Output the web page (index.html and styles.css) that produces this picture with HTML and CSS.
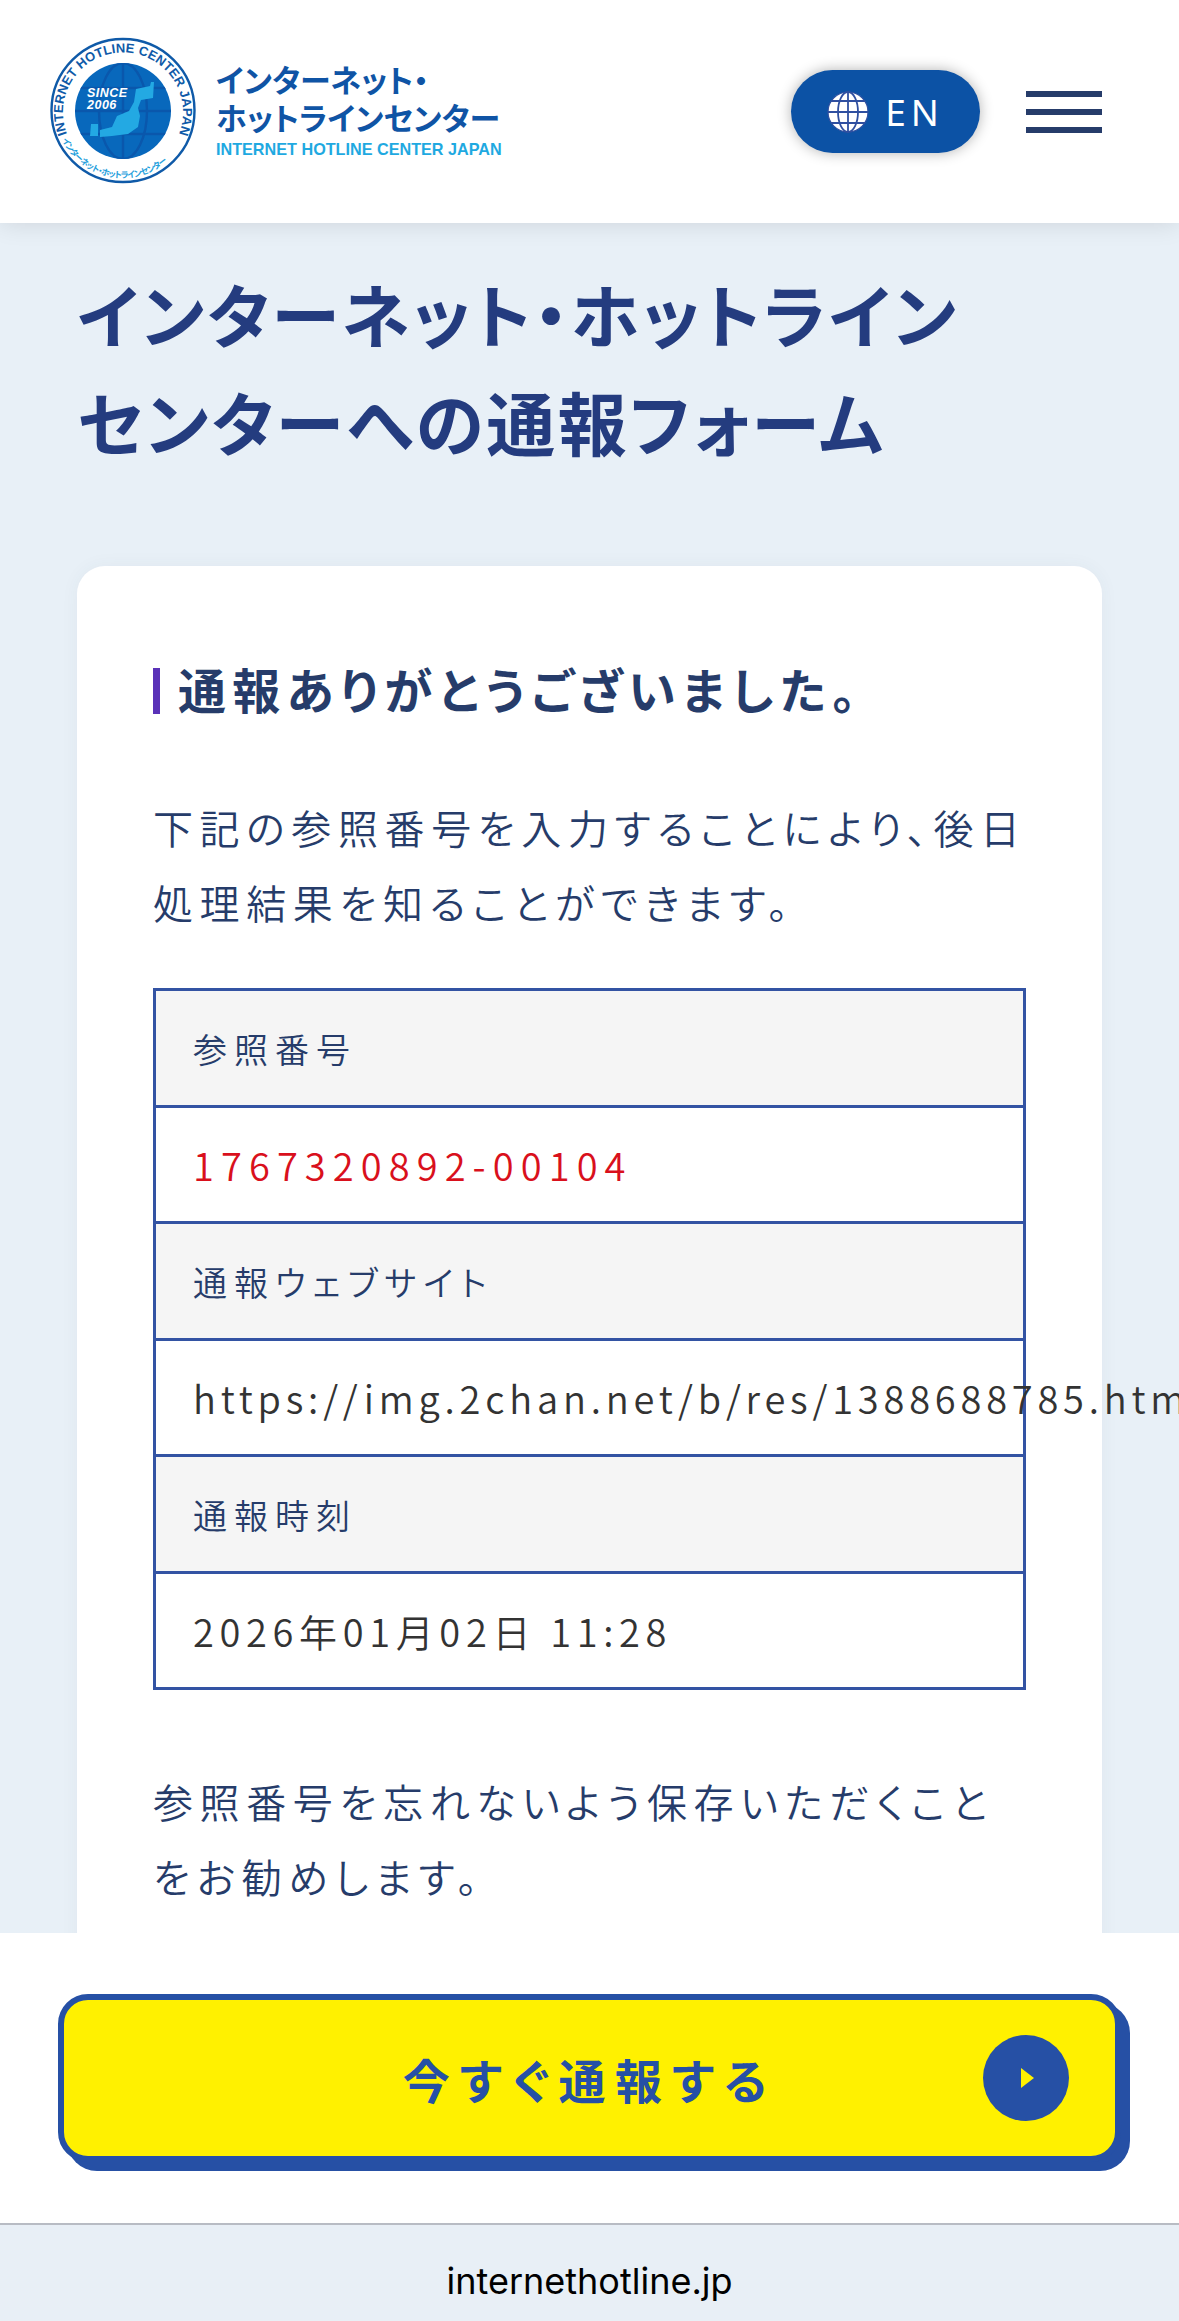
FILE: index.html
```html
<!DOCTYPE html>
<html lang="ja">
<head>
    <meta charset="UTF-8">
    <meta name="viewport" content="width=device-width, initial-scale=1.0">
    <title>インターネット・ホットラインセンターへの通報フォーム</title>
    <link rel="stylesheet" href="styles.css">
</head>
<body>
    <header class="site-header">
        <a class="logo" href="#">
            <svg class="logo-mark" viewBox="0 0 170 160" width="170" height="160">
                <defs>
                    <path id="ringTop" d="M27 104 A60 60 0 1 1 139 104"/>
                    <path id="ringBottom" d="M22 110 A68 68 0 0 0 144 110"/>
                    <clipPath id="globeClip"><circle cx="83" cy="81" r="48"/></clipPath>
                </defs>
                <circle cx="83" cy="80.5" r="71.5" fill="#fff" stroke="#0f5aa8" stroke-width="2.4"/>
                <circle cx="83" cy="81" r="48" fill="#0868bc"/>
                <g clip-path="url(#globeClip)" fill="none" stroke="#0a57ac" stroke-width="2.4">
                    <ellipse cx="83" cy="81" rx="24" ry="48"/>
                    <path d="M83 33V129M35 81H131M38 58H128M38 104H128"/>
                </g>
                <path class="logo-land" d="M96 59 L110 56 L111 52 L114 52 L113 68 L101 70 L98 78 L100 86 L98 97 L88 104 L72 106 L60 107 L60 100 L72 97 L77 86 L89 81 L94 72 Z"/>
                <path class="logo-land" d="M51 94 L58 94 L58 106 L50 106 Z"/>
                <text class="logo-since" x="47" y="67">SINCE</text>
                <text class="logo-since" x="47" y="79">2006</text>
                <text class="logo-ring"><textPath href="#ringTop" textLength="232" lengthAdjust="spacing">INTERNET HOTLINE CENTER JAPAN</textPath></text>
                <text class="logo-ring-ja"><textPath href="#ringBottom" textLength="124" lengthAdjust="spacing">インターネット・ホットラインセンター</textPath></text>
            </svg>
            <span class="logo-text">
                <span class="logo-ja">インターネット・</span>
                <span class="logo-ja">ホットラインセンター</span>
                <span class="logo-en">INTERNET HOTLINE CENTER JAPAN</span>
            </span>
        </a>
        <div class="header-actions">
            <a class="lang-btn" href="#">
                <svg class="lang-globe" viewBox="0 0 42 42" width="42" height="42">
                    <circle cx="21" cy="21" r="20" fill="#fff" stroke="#2f4fa0" stroke-width="1.2"/>
                    <g fill="none" stroke="#2f4fa0" stroke-width="1.8">
                        <ellipse cx="21" cy="21" rx="10" ry="20"/>
                        <path d="M21 1V41M1 21H41M4 10H38M4 32H38"/>
                    </g>
                </svg>
                <span>EN</span>
            </a>
            <button class="menu-btn" aria-label="menu"><span></span><span></span><span></span></button>
        </div>
    </header>

    <main class="content">
        <h1>インターネット・ホットライン<br>センターへの通報フォーム</h1>

        <section class="card">
            <h2>通報ありがとうございました。</h2>
            <p class="lead">下記の参照番号を入力することにより、後日<br>処理結果を知ることができます。</p>

            <dl class="report-table">
                <dt>参照番号</dt>
                <dd class="ref-no">1767320892-00104</dd>
                <dt>通報ウェブサイト</dt>
                <dd>https://img.2chan.net/b/res/1388688785.html</dd>
                <dt>通報時刻</dt>
                <dd class="report-date">2026年01月02日 11:28</dd>
            </dl>

            <p class="note">参照番号を忘れないよう保存いただくこと<br>をお勧めします。</p>
        </section>
    </main>

    <div class="bottom-bar">
        <div class="cta-wrap">
            <a class="cta" href="#">
                <span class="cta-label">今すぐ通報する</span>
                <span class="cta-arrow"></span>
            </a>
        </div>
        <div class="url-bar">internethotline.jp</div>
    </div>
</body>
</html>
```

FILE: styles.css
```css
html, body {
    margin: 0;
    height: 2321px;
    overflow: hidden;
}
body {
    font-family: "Noto Sans CJK JP", "Noto Sans", sans-serif;
    font-feature-settings: "palt";
    background-color: #e8f0f7;
    color: #263c6a;
}
a {
    text-decoration: none;
}

/* header */
.site-header {
    height: 223px;
    box-sizing: border-box;
    padding: 0 77px 0 40px;
    display: flex;
    justify-content: space-between;
    align-items: center;
    background-color: #fff;
    box-shadow: 0 0 24px rgba(0, 0, 0, 0.12);
    position: relative;
}
.logo {
    display: flex;
    align-items: center;
    margin-top: -4px;
}
.logo-mark {
    display: block;
}
.logo-land {
    fill: #23a9e3;
}
.logo-since {
    font-family: "Liberation Sans", sans-serif;
    font-size: 12.5px;
    letter-spacing: 0.5px;
    font-weight: bold;
    font-style: italic;
    fill: #fff;
}
.logo-ring {
    font-family: "Liberation Sans", sans-serif;
    font-size: 13px;
    font-weight: bold;
    fill: #0f5aa8;
}
.logo-ring-ja {
    font-size: 8.5px;
    font-weight: bold;
    fill: #1fa0dc;
}
.logo-text {
    display: flex;
    flex-direction: column;
    margin-left: 6px;
}
.logo-ja {
    font-size: 31px;
    line-height: 38px;
    font-weight: bold;
    color: #0f54a5;
    white-space: nowrap;
}
.logo-en {
    font-family: "Liberation Sans", sans-serif;
    font-size: 16.2px;
    line-height: 22px;
    margin-top: 2px;
    font-weight: bold;
    color: #1fa9e1;
    white-space: nowrap;
}
.header-actions {
    display: flex;
    align-items: center;
    gap: 46px;
}
.lang-btn {
    width: 189px;
    height: 83px;
    box-sizing: border-box;
    border-radius: 42px;
    background-color: #0c52a5;
    box-shadow: 0 0 14px rgba(0, 0, 0, 0.3);
    display: flex;
    align-items: center;
    justify-content: center;
    gap: 16px;
    color: #fff;
    font-family: "Noto Sans", sans-serif;
    font-size: 37px;
    letter-spacing: 5px;
}
.menu-btn {
    width: 76px;
    height: 42px;
    padding: 0;
    border: none;
    background: none;
    display: flex;
    flex-direction: column;
    justify-content: space-between;
}
.menu-btn span {
    display: block;
    height: 6px;
    background-color: #263c6a;
}

/* content */
.content {
    padding: 36px 77px 0;
}
h1 {
    margin: 0 0 91px;
    font-size: 69px;
    line-height: 108px;
    letter-spacing: 2.5px;
    font-weight: bold;
    color: #243c7f;
    white-space: nowrap;
}
.card {
    padding: 102px 76px 120px;
    background-color: #fff;
    border-radius: 28px;
    box-shadow: 0 0 18px rgba(60, 80, 90, 0.05);
}
h2 {
    margin: 0 0 76px;
    border-left: 7px solid #5a32b8;
    padding: 0 0 6px 18px;
    font-size: 48px;
    line-height: 40px;
    letter-spacing: 6.3px;
    font-weight: bold;
    white-space: nowrap;
}
.lead, .note {
    font-size: 40px;
    font-weight: 350;
    line-height: 75px;
    letter-spacing: 6.6px;
    white-space: nowrap;
}
.lead {
    margin: 0 0 48px;
}
.note {
    margin: 74px 0 0;
}

/* result table */
.report-table {
    margin: 0;
    border-top: 3px solid #3353a3;
    border-left: 3px solid #3353a3;
    border-right: 3px solid #3353a3;
    font-size: 34px;
    font-weight: 350;
    letter-spacing: 7px;
    white-space: nowrap;
}
.report-table dt, .report-table dd {
    margin: 0;
    height: 116.5px;
    box-sizing: border-box;
    padding: 1px 0 0 37px;
    border-bottom: 3px solid #3353a3;
    display: flex;
    align-items: center;
}
.report-table dt {
    background-color: #f5f5f5;
}
.report-table dd {
    font-size: 38px;
    letter-spacing: 4.8px;
    color: #333;
}
.report-table .ref-no {
    letter-spacing: 7.1px;
    color: #d9101c;
}
.report-table .report-date {
    letter-spacing: 5.65px;
}

/* bottom fixed bar */
.bottom-bar {
    position: fixed;
    left: 0;
    right: 0;
    bottom: 0;
}
.cta-wrap {
    height: 290px;
    box-sizing: border-box;
    padding: 61px 58px 0;
    background-color: #fff;
}
.cta {
    height: 168px;
    box-sizing: border-box;
    border: 6px solid #2650a5;
    border-radius: 30px;
    background-color: #fff100;
    box-shadow: 9px 9px 0 #2650a5;
    display: flex;
    align-items: center;
    justify-content: center;
    position: relative;
}
.cta-label {
    font-size: 47px;
    font-weight: bold;
    letter-spacing: 9.5px;
    color: #2650a5;
}
.cta-arrow {
    position: absolute;
    top: 35px;
    right: 46px;
    width: 86px;
    height: 86px;
    border-radius: 50%;
    background-color: #2650a5;
    display: flex;
    align-items: center;
    justify-content: center;
}
.cta-arrow::after {
    content: "";
    margin-left: 2px;
    border-left: 13px solid #fff100;
    border-top: 10px solid transparent;
    border-bottom: 10px solid transparent;
}
.url-bar {
    height: 98px;
    box-sizing: border-box;
    border-top: 2px solid #b8bcc4;
    background-color: #e8eff6;
    display: flex;
    align-items: center;
    justify-content: center;
    padding-top: 16px;
    font-family: Inter, "Liberation Sans", sans-serif;
    font-size: 36px;
    color: #000;
}
```
